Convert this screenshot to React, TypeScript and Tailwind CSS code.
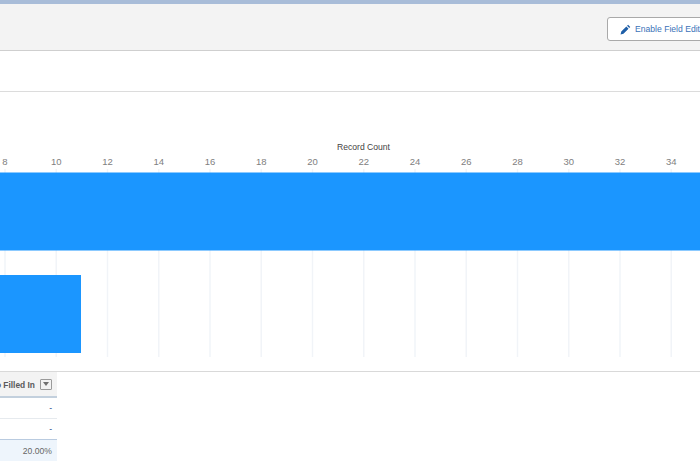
import React from 'react';

const ticks = [8, 10, 12, 14, 16, 18, 20, 22, 24, 26, 28, 30, 32, 34];
const tickX = (i: number) => 5 + i * 51.25;

function Chart() {
  return (
    <svg width="700" height="280" viewBox="0 0 700 280" className="block" fontFamily="'Liberation Sans', Arial, sans-serif">
      <text x="363.5" y="58" textAnchor="middle" fontSize="8.6" fill="#444444">Record Count</text>
      {ticks.map((t, i) => (
        <g key={t}>
          <text x={tickX(i)} y="73" textAnchor="middle" fontSize="9.5" fill="#808080">{t}</text>
          <line x1={tickX(i)} x2={tickX(i)} y1="77" y2="265" stroke="#f1f4f8" strokeWidth="1.5" />
        </g>
      ))}
      <rect x="0" y="80.5" width="700" height="78" fill="#1b96ff" />
      <rect x="0" y="183" width="81" height="78" fill="#1b96ff" />
    </svg>
  );
}

export default function App() {
  return (
    <div className="w-[700px] h-[475px] overflow-hidden bg-white font-['Liberation_Sans',Arial,sans-serif]">
      <div className="h-[4px] bg-[#a8bcd8]" />
      <div className="h-[47px] bg-[#f3f3f3] border-b border-[#cfcfcf] flex items-start justify-end pt-[13px] overflow-hidden">
        <button className="shrink-0 w-[100px] -mr-[7px] h-[24px] bg-white border border-[#a9a9a9] rounded-[3px] flex items-center pl-[12px] gap-[4px] overflow-hidden whitespace-nowrap">
          <svg width="11" height="11" viewBox="0 0 12 12" className="shrink-0">
            <path d="M8.8.8l2.4 2.4-1.1 1.1-2.4-2.4zM6.9 2.7l2.4 2.4-5.5 5.5-3.2.8.8-3.2z" fill="#1f5fa8" />
          </svg>
          <span className="text-[8.6px] text-[#3a72b8]">Enable Field Edit</span>
        </button>
      </div>
      <div className="h-[41px] border-b border-[#dcdcdc]" />
      <div className="h-[280px] border-b border-[#d9d9d9] overflow-hidden">
        <Chart />
      </div>
      <div className="w-[57px] text-[8.6px]">
        <div className="h-[26px] pt-[2px] bg-[#f3f3f3] border-b-2 border-[#c3d0dd] flex items-center justify-end pr-[5px] gap-[5px] whitespace-nowrap overflow-hidden">
          <span className="font-bold text-[8.4px] text-[#5a5a5a]">Info Filled In</span>
          <span className="shrink-0 w-[12px] h-[11px] -mt-[2px] bg-[#f3f3f3] border border-[#9a9a9a] rounded-[1px] flex items-center justify-center">
            <svg width="6" height="4" viewBox="0 0 6 4">
              <path d="M0 0h6L3 4z" fill="#707070" />
            </svg>
          </span>
        </div>
        <div className="h-[21px] border-b border-[#e6eaee] flex items-center justify-end pr-[5px] text-[#1f4f8f]">-</div>
        <div className="h-[21px] border-b border-[#b9cbe0] flex items-center justify-end pr-[5px] text-[#1f4f8f]">-</div>
        <div className="h-[21px] pt-[1px] bg-[#eef5fc] flex items-center justify-end pr-[5px] text-[#666666]">20.00%</div>
      </div>
    </div>
  );
}
